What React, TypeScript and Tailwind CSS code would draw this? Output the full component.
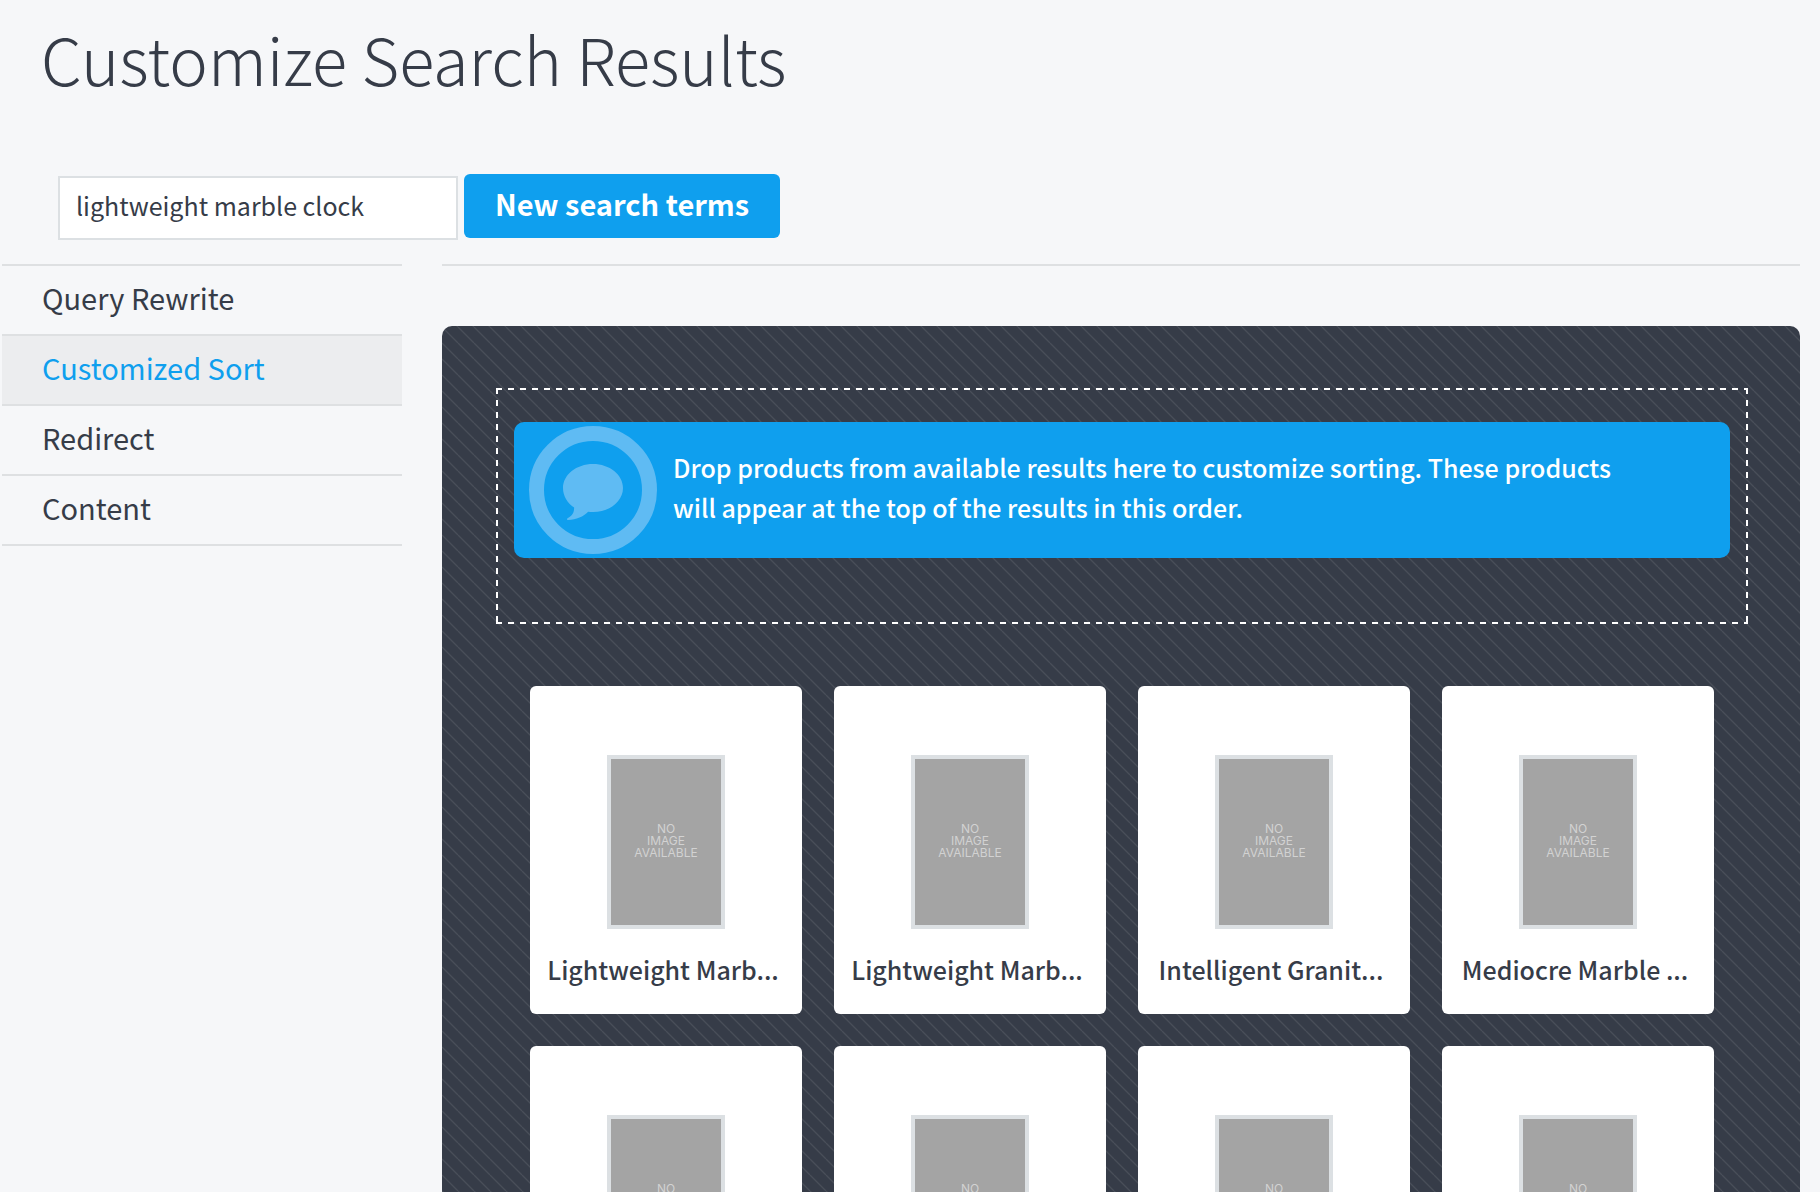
const navItems = ['Query Rewrite', 'Customized Sort', 'Redirect', 'Content'];

const products = [
  'Lightweight Marb...',
  'Lightweight Marb...',
  'Intelligent Granit...',
  'Mediocre Marble ...',
  'Lightweight Marb...',
  'Lightweight Marb...',
  'Intelligent Granit...',
  'Mediocre Marble ...',
];

function ChatBadge() {
  return (
    <svg viewBox="0 0 128 128" className="size-32 shrink-0 text-[#5fbbf3]" aria-hidden="true">
      <circle cx="64" cy="64" r="56.5" fill="none" stroke="currentColor" strokeWidth="15" />
      <path
        fill="currentColor"
        d="M64 38c16.6 0 30 10.700 30 24S80.600 86 64 86c-1.700 0-3.300-.1-4.900-.2C54.500 90.500 47.500 94 39 94c-1.200 0-1.500-1.200-.4-1.800 4.700-2.300 6.700-5.800 6.500-10.800C38.300 77 34 70 34 62c0-13.300 13.400-24 30-24Z"
      />
    </svg>
  );
}

function SideNav() {
  return (
    <nav className="border-t-2 border-[#dee0e2]">
      <ul>
        {navItems.map((item) => (
          <li key={item} className="border-b-2 border-[#dee0e2]">
            <a
              href="#"
              className={
                item === 'Customized Sort'
                  ? 'block bg-[#ecedef] px-10 pb-1.5 text-[29px] leading-[62px] text-[#0f9fee]'
                  : 'block px-10 pb-1.5 text-[29px] leading-[62px]'
              }
            >
              {item}
            </a>
          </li>
        ))}
      </ul>
    </nav>
  );
}

function ProductCard({ title }: { title: string }) {
  return (
    <article className="flex h-[328px] flex-col items-center rounded-md bg-white pt-[69px]">
      <div className="flex h-[174px] w-[118px] flex-col items-center justify-center border-4 border-[#dce0e3] bg-[#a4a4a4] pb-0.5 text-center font-['Inter'] text-[12px] leading-3 text-[#d2d2d2]">
        <span>NO</span>
        <span>IMAGE</span>
        <span>AVAILABLE</span>
      </div>
      <h2 className="mt-5 pr-1.5 text-[25px] leading-10 font-medium whitespace-nowrap">{title}</h2>
    </article>
  );
}

export default function App() {
  return (
    <div
      lang="en"
      className="min-h-screen bg-[#f6f7f9] font-['Noto_Sans_CJK_SC','Noto_Sans',sans-serif] text-[#363c48]"
    >
      <header className="px-[41px] pt-2.5">
        <h1 className="text-[65px] leading-[96px] font-light">Customize Search Results</h1>
      </header>

      <form className="mt-17 flex gap-1.5 px-[58px]" onSubmit={(e) => e.preventDefault()}>
        <input
          type="text"
          aria-label="Search terms"
          defaultValue="lightweight marble clock"
          className="mt-0.5 h-16 w-[400px] border-2 border-[#dce0e3] bg-white px-4 pb-1.5 text-[25px]"
        />
        <button type="submit" className="h-16 rounded-md bg-[#0f9fee] px-[31px] pb-1.5 text-[29px] leading-none font-bold text-white">
          New search terms
        </button>
      </form>

      <div className="mt-6 grid grid-cols-[400px_1fr] items-start gap-10 pr-5 pl-0.5">
        <SideNav />

        <main className="border-t-2 border-[#dee0e2] pt-[60px]">
          <section className="rounded-[10px] bg-[#363c48] bg-[linear-gradient(45deg,#494e59_0%,transparent_4%,transparent_46%,#494e59_48%,#494e59_52%,transparent_54%,transparent_96%,#494e59_100%)] bg-[length:16px_16px] bg-[position:0_1px] pt-[62px] pr-[52px] pb-16 pl-[54px]">
            <div className="h-[236px] bg-[repeating-linear-gradient(90deg,#fff_0_6px,transparent_6px_12px),repeating-linear-gradient(90deg,#fff_0_6px,transparent_6px_12px),repeating-linear-gradient(180deg,#fff_0_6px,transparent_6px_12px),repeating-linear-gradient(180deg,#fff_0_6px,transparent_6px_12px)] bg-[length:100%_2px,100%_2px,2px_100%,2px_100%] bg-[position:left_top,left_bottom,left_top,right_top] bg-no-repeat px-[18px] py-[34px]">
              <div className="flex items-center gap-4 rounded-[10px] bg-[#0f9fee] py-1 pr-20 pl-[15px] text-white">
                <ChatBadge />
                <p className="pb-1.5 text-[25px] leading-10 font-medium">
                  Drop products from available results here to customize sorting. These products{' '}
                  <br />
                  will appear at the top of the results in this order.
                </p>
              </div>
            </div>

            <div className="mt-[62px] grid grid-cols-4 gap-8 px-[34px]">
              {products.map((title, i) => (
                <ProductCard key={i} title={title} />
              ))}
            </div>
          </section>
        </main>
      </div>
    </div>
  );
}
